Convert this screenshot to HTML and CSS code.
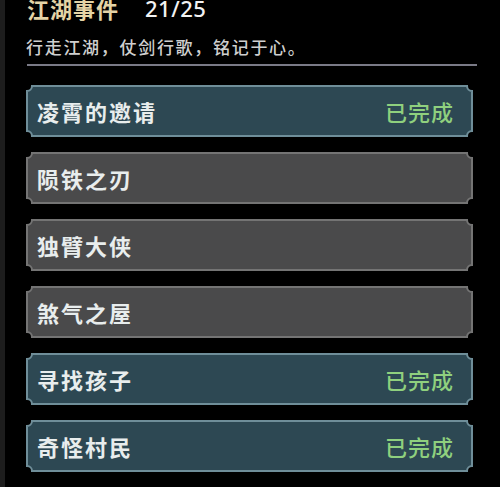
FILE: index.html
```html
<!DOCTYPE html>
<html lang="zh">
<head>
<meta charset="utf-8">
<link rel="stylesheet" href="styles.css">
</head>
<body>
<div class="page">
  <div class="strip"></div>
  <div class="main">
    <div class="title-row">
      <span class="title">江湖事件</span>
      <span class="count">21/25</span>
    </div>
    <div class="subtitle">行走江湖，仗剑行歌，铭记于心。</div>
    <div class="divider"></div>
    <div class="list">
      <div class="card done"><span class="name">凌霄的邀请</span><span class="status">已完成</span></div>
      <div class="card todo"><span class="name">陨铁之刃</span></div>
      <div class="card todo"><span class="name">独臂大侠</span></div>
      <div class="card todo"><span class="name">煞气之屋</span></div>
      <div class="card done"><span class="name">寻找孩子</span><span class="status">已完成</span></div>
      <div class="card done"><span class="name">奇怪村民</span><span class="status">已完成</span></div>
    </div>
  </div>
</div>
</body>
</html>
```

FILE: styles.css
```css
html, body {
  margin: 0;
  padding: 0;
  background: #000;
}
body {
  width: 500px;
  height: 487px;
  overflow: hidden;
  font-family: "Noto Sans CJK SC", "Noto Sans", sans-serif;
}
.page {
  display: flex;
  height: 487px;
}
.strip {
  width: 5px;
  flex: none;
  background: #1d1d1d;
}
.main {
  flex: 1;
  padding-left: 21px;
  padding-right: 22px;
}
.title-row {
  height: 16px;
  line-height: 16px;
  display: flex;
  align-items: center;
  gap: 26px;
  padding-left: 1px;
}
.title {
  font-size: 22px;
  font-weight: 700;
  color: #e4d3a6;
  letter-spacing: 1px;
}
.count {
  font-family: "Noto Sans", "Liberation Sans", sans-serif;
  font-size: 22px;
  font-weight: 500;
  color: #f2f2f2;
  letter-spacing: 0.5px;
}
.subtitle {
  margin-top: 21px;
  height: 20px;
  line-height: 20px;
  font-size: 17px;
  font-weight: 500;
  color: #cfcfcf;
  letter-spacing: 1.7px;
}
.divider {
  margin-top: 7px;
  height: 2px;
  width: 450px;
  margin-left: 1px;
  background: #7a7a86;
}
.list {
  margin-top: 19px;
  display: flex;
  flex-direction: column;
  gap: 15px;
  width: 447px;
}
.card {
  height: 52px;
  box-sizing: border-box;
  display: flex;
  align-items: center;
  justify-content: space-between;
  padding: 0 17px 0 9px;
  border: 2px solid transparent;
}
.card.done {
  border-image: url("data:image/svg+xml,%3Csvg xmlns='http://www.w3.org/2000/svg' width='30' height='30' viewBox='0 0 30 30'%3E%3Cpath d='M6,1 H24 A5,5 0 0 0 29,6 V24 A5,5 0 0 0 24,29 H6 A5,5 0 0 0 1,24 V6 A5,5 0 0 0 6,1 Z' fill='%232d4853' stroke='%236f8e99' stroke-width='2'/%3E%3C/svg%3E") 10 fill / 10px stretch;
}
.card.todo {
  border-image: url("data:image/svg+xml,%3Csvg xmlns='http://www.w3.org/2000/svg' width='30' height='30' viewBox='0 0 30 30'%3E%3Cpath d='M6,1 H24 A5,5 0 0 0 29,6 V24 A5,5 0 0 0 24,29 H6 A5,5 0 0 0 1,24 V6 A5,5 0 0 0 6,1 Z' fill='%234a4a4b' stroke='%23747474' stroke-width='2'/%3E%3C/svg%3E") 10 fill / 10px stretch;
}
.name {
  font-size: 22px;
  line-height: 1;
  font-weight: 700;
  color: #e8eded;
  letter-spacing: 2px;
}
.status {
  font-size: 22px;
  line-height: 1;
  font-weight: 500;
  color: #8fd07e;
  letter-spacing: 1px;
}
```
